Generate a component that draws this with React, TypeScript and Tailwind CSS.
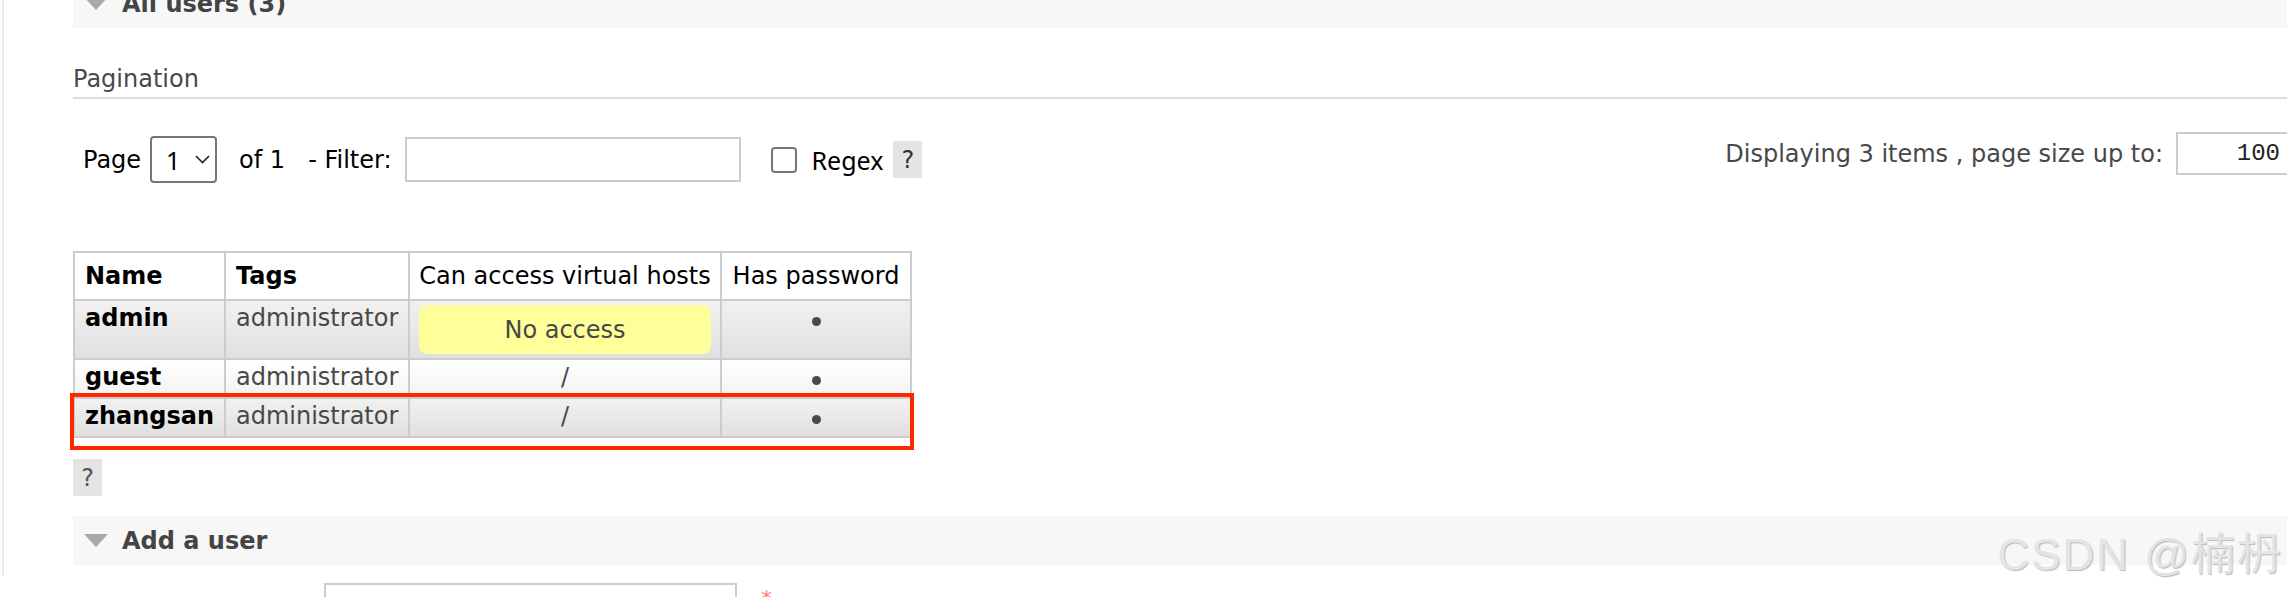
import React from 'react'

const users = [
  { name: 'admin', tags: 'administrator', vhosts: null, alt: true, h: 'h-[58px]' },
  { name: 'guest', tags: 'administrator', vhosts: '/', alt: false, h: 'h-[39px]' },
  { name: 'zhangsan', tags: 'administrator', vhosts: '/', alt: true, h: 'h-[39px]' },
]

function Triangle() {
  return (
    <svg width="24" height="13" viewBox="0 0 24 13" className="shrink-0">
      <polygon points="0,0 24,0 12,13" fill="#a8a8a8" />
    </svg>
  )
}

function SectionBar({ title, className = '' }: { title: string; className?: string }) {
  return (
    <div className={`flex h-[49px] items-center gap-[14px] bg-[#f7f7f7] pl-[11px] ${className}`}>
      <Triangle />
      <span className="text-[24px] font-bold leading-[28px] text-[#444]">{title}</span>
    </div>
  )
}

function Dot() {
  return <span className="mt-[5px] inline-block h-[9px] w-[9px] rounded-full bg-[#484848]" />
}

export default function App() {
  return (
    <div className="relative h-[597px] w-[2287px] overflow-hidden bg-white font-['DejaVu_Sans',sans-serif] text-[24px] leading-[28px] text-black">
      <div className="ml-[2px] h-full border-l-2 border-[#ebebeb] pl-[69px]">
        <SectionBar title="All users (3)" className="-mt-[21px]" />

        {/* Pagination */}
        <div className="mt-[37px] border-b-2 border-[#dddddd] pb-[4px] text-[#484848]">Pagination</div>

        <div className="mt-[37px] flex items-start justify-between">
          <div className="flex h-[47px] items-center pl-[10px]">
            <span>Page</span>
            <div className="ml-[9px] flex h-[47px] w-[67px] items-center rounded-[4px] border-2 border-[#767676] pl-[14px]">
              <span className="font-['Noto_Sans',sans-serif] text-[25px] leading-[28px]">1</span>
              <svg width="15" height="9" viewBox="0 0 15 9" className="ml-[15px]">
                <polyline points="1,1 7.5,7.5 14,1" fill="none" stroke="#222" strokeWidth="1.6" />
              </svg>
            </div>
            <span className="ml-[22px]">of 1</span>
            <span className="ml-[23px]">- Filter:</span>
            <div className="ml-[13px] h-[45px] w-[336px] border-2 border-[#cccccc] bg-white" />
            <div className="ml-[30px] h-[26px] w-[26px] rounded-[4px] border-2 border-[#767676] bg-white" />
            <span className="ml-[15px] font-['Noto_Sans',sans-serif] text-[25px]">Regex</span>
            <span className="ml-[10px] flex h-[37px] w-[29px] items-center justify-center bg-[#e4e4e4] text-[#333]">?</span>
          </div>

          <div className="-mr-[20px] -mt-[4px] flex h-[43px] items-center">
            <span className="text-[#484848]">Displaying 3 items , page size up to:</span>
            <div className="ml-[13px] flex h-[43px] w-[131px] items-center justify-end border-2 border-[#cccccc] pr-[25px] font-['Liberation_Mono',monospace] text-[24px] text-[#222]">
              100
            </div>
          </div>
        </div>

        {/* Users table */}
        <div className="relative mt-[68px] w-[837px]">
          <table className="w-[837px] table-fixed border-collapse">
            <colgroup>
              <col className="w-[151px]" />
              <col className="w-[184px]" />
              <col className="w-[312px]" />
              <col className="w-[190px]" />
            </colgroup>
            <thead>
              <tr className="h-[48px] bg-white">
                <th className="border-2 border-[#cccccc] px-[10px] text-left font-bold">Name</th>
                <th className="border-2 border-[#cccccc] px-[10px] text-left font-bold">Tags</th>
                <th className="border-2 border-[#cccccc] px-[8px] text-center font-normal whitespace-nowrap">Can access virtual hosts</th>
                <th className="border-2 border-[#cccccc] px-[8px] text-center font-normal whitespace-nowrap">Has password</th>
              </tr>
            </thead>
            <tbody>
              {users.map((u) => {
                const bg = u.alt
                  ? 'bg-gradient-to-b from-[#f1f1f1] to-[#e0e0e0]'
                  : 'bg-gradient-to-b from-[#ffffff] to-[#f3f3f3]'
                return (
                  <tr key={u.name} className={u.h}>
                    <td className={`border-2 border-[#cccccc] px-[10px] pt-[3px] align-top font-bold whitespace-nowrap ${bg}`}>{u.name}</td>
                    <td className={`border-2 border-[#cccccc] px-[10px] pt-[3px] align-top whitespace-nowrap text-[#484848] ${bg}`}>{u.tags}</td>
                    {u.vhosts === null ? (
                      <td className={`border-2 border-[#cccccc] px-[9px] py-[4px] align-top ${bg}`}>
                        <div className="flex h-[49px] items-center justify-center rounded-[8px] bg-[#ffff99] text-[#484848]">No access</div>
                      </td>
                    ) : (
                      <td className={`border-2 border-[#cccccc] pt-[3px] align-top text-center text-[#484848] ${bg}`}>{u.vhosts}</td>
                    )}
                    <td className={`border-2 border-[#cccccc] pt-[3px] align-top text-center ${bg}`}>
                      <Dot />
                    </td>
                  </tr>
                )
              })}
            </tbody>
          </table>
          {/* highlight box */}
          <div className="pointer-events-none absolute left-[-3px] top-[142px] h-[57px] w-[844px] border-4 border-[#ff2600]" />
        </div>

        <div className="mt-[21px] flex h-[37px] w-[29px] items-center justify-center bg-[#e4e4e4] text-[#555]">?</div>

        <SectionBar title="Add a user" className="mt-[20px]" />

        <div className="mt-[18px] flex items-start">
          <div className="ml-[251px] h-[44px] w-[413px] border-2 border-[#cccccc]" />
          <span className="ml-[24px] mt-[2px] text-[22px] text-[#ff8080]">*</span>
        </div>
      </div>

      {/* watermark */}
      <div className="pointer-events-none absolute right-[4px] top-[530px] whitespace-nowrap font-['Liberation_Sans','Noto_Sans_CJK_SC',sans-serif] text-[44px] leading-[50px] tracking-[2px] text-[#e4e4e4] [text-shadow:1px_1px_1px_#b8b8b8]">
        CSDN @楠枬
      </div>
    </div>
  )
}
